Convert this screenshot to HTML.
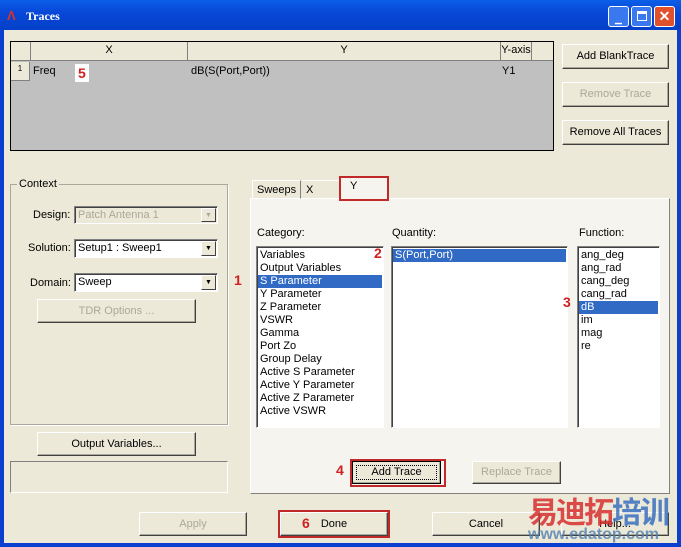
<!DOCTYPE html>
<html><head><meta charset="utf-8"><style>
*{box-sizing:border-box;margin:0;padding:0}
body{width:681px;height:547px;overflow:hidden;background:#0a3fd0;font-family:"Liberation Sans",sans-serif;font-size:11px;color:#000;position:relative}
.a{position:absolute}
.win{left:4px;top:30px;width:673px;height:513px;background:#ECE9D8}
.btn{position:absolute;background:#ECE9D8;border:1px solid;border-color:#fff #404040 #404040 #fff;box-shadow:inset -1px -1px 0 #aca899;text-align:center;font-size:11px}
.dis{color:#aca899}
.sunk{position:absolute;background:#fff;border:1px solid;border-color:#808080 #fff #fff #808080;box-shadow:inset 1px 1px 0 #404040}
.red{position:absolute;border:2px solid #c0282a}
.num{position:absolute;color:#d02020;font-weight:bold;font-size:14px}
.li{height:13px;line-height:13px;padding-left:2px;font-size:11px}
.sel{background:#316ac5;color:#fff}
.combo{position:absolute;background:#fff;border:1px solid;border-color:#808080 #fff #fff #808080;box-shadow:inset 1px 1px 0 #404040;padding:2px 3px;font-size:11px}
.dd{position:absolute;right:1px;top:1px;width:15px;bottom:1px;background:#ECE9D8;border:1px solid;border-color:#fff #404040 #404040 #fff;font-size:7px;text-align:center;line-height:14px}
</style></head><body>
<div class="a" style="left:0;top:0;width:681px;height:30px;background:linear-gradient(#0a5fe8,#0848d8 40%,#0440c8)"></div>
<div class="a" style="left:7px;top:8px;color:#e03020;font-size:13px;font-weight:bold">&#923;</div>
<div class="a" style="left:26px;top:9px;color:#fff;font-weight:bold;font-size:12px;font-family:'Liberation Serif',serif">Traces</div>
<div class="a" style="left:608px;top:6px;width:21px;height:21px;background:#3a78f0;border:1px solid #fff;border-radius:3px;color:#fff;font-size:9px;text-align:center;line-height:24px">▁</div>
<div class="a" style="left:631px;top:6px;width:21px;height:21px;background:#3a78f0;border:1px solid #fff;border-radius:3px"><div class="a" style="left:5px;top:4px;width:10px;height:10px;border:1px solid #fff;border-top-width:3px"></div></div>
<div class="a" style="left:654px;top:6px;width:21px;height:21px;background:#e0502a;border:1px solid #fff;border-radius:3px;color:#fff;font-weight:bold;font-size:14px;text-align:center;line-height:19px">✕</div>
<div class="a win"></div>

<!-- table -->
<div class="a" style="left:10px;top:41px;width:544px;height:110px;background:#c0c0c0;border:1px solid #000"></div>
<div class="a" style="left:11px;top:42px;width:542px;height:19px;background:#ECE9D8;border-bottom:1px solid #808080"></div>
<div class="a" style="left:30px;top:42px;width:158px;height:19px;border-left:1px solid #808080;border-right:1px solid #808080;text-align:center;line-height:17px">X</div>
<div class="a" style="left:188px;top:42px;width:312px;height:19px;text-align:center;line-height:17px">Y</div>
<div class="a" style="left:500px;top:42px;width:32px;height:19px;border-left:1px solid #808080;border-right:1px solid #808080;text-align:center;line-height:17px">Y-axis</div>
<div class="a" style="left:11px;top:62px;width:19px;height:19px;background:#ECE9D8;border-right:1px solid #808080;border-bottom:1px solid #808080;font-size:8px;text-align:center;line-height:14px">1</div>
<div class="a" style="left:33px;top:65px">Freq</div>
<div class="a" style="left:191px;top:65px">dB(S(Port,Port))</div>
<div class="a" style="left:502px;top:65px">Y1</div>
<div class="a" style="left:75px;top:64px;width:14px;height:18px;background:#fff"></div>
<div class="num" style="left:78px;top:65px">5</div>

<div class="btn" style="left:562px;top:44px;width:107px;height:25px;line-height:23px">Add BlankTrace</div>
<div class="btn dis" style="left:562px;top:82px;width:107px;height:25px;line-height:23px">Remove Trace</div>
<div class="btn" style="left:562px;top:120px;width:107px;height:25px;line-height:23px">Remove All Traces</div>

<!-- context -->
<div class="a" style="left:10px;top:184px;width:218px;height:241px;border:1px solid #aca899;box-shadow:1px 1px 0 #fff"></div>
<div class="a" style="left:17px;top:178px;background:#ECE9D8;padding:0 2px">Context</div>
<div class="a" style="left:33px;top:209px;color:#000">Design:</div>
<div class="combo dis" style="left:74px;top:206px;width:144px;height:18px;background:#ECE9D8">Patch Antenna 1<div class="dd">▼</div></div>
<div class="a" style="left:28px;top:242px">Solution:</div>
<div class="combo" style="left:74px;top:239px;width:144px;height:19px">Setup1 : Sweep1<div class="dd">▼</div></div>
<div class="a" style="left:30px;top:277px">Domain:</div>
<div class="combo" style="left:74px;top:273px;width:144px;height:19px">Sweep<div class="dd">▼</div></div>
<div class="btn dis" style="left:37px;top:299px;width:159px;height:24px;line-height:22px">TDR Options ...</div>
<div class="btn" style="left:37px;top:432px;width:159px;height:24px;line-height:22px">Output Variables...</div>
<div class="a" style="left:10px;top:461px;width:218px;height:32px;border:1px solid;border-color:#808080 #fff #fff #808080"></div>
<div class="num" style="left:234px;top:272px">1</div>

<!-- tabs -->
<div class="a" style="left:250px;top:198px;width:420px;height:296px;border:1px solid;border-color:#fff #808080 #808080 #fff;background:#f5f4ee"></div>
<div class="a" style="left:252px;top:180px;width:49px;height:19px;border:1px solid;border-color:#fff #808080 transparent #fff;padding:3px 0 0 4px">Sweeps</div>
<div class="a" style="left:302px;top:180px;width:38px;height:19px;border-top:1px solid #fff;padding:3px 0 0 4px">X</div>
<div class="a" style="left:341px;top:178px;width:46px;height:21px;background:#f5f4ee;padding:2px 0 0 9px">Y</div>
<div class="red" style="left:339px;top:176px;width:50px;height:25px"></div>

<div class="a" style="left:257px;top:227px">Category:</div>
<div class="a" style="left:392px;top:227px">Quantity:</div>
<div class="a" style="left:579px;top:227px">Function:</div>
<div class="sunk" style="left:256px;top:246px;width:128px;height:182px;padding:2px 1px">
<div class="li">Variables</div><div class="li">Output Variables</div><div class="li sel">S Parameter</div><div class="li">Y Parameter</div><div class="li">Z Parameter</div><div class="li">VSWR</div><div class="li">Gamma</div><div class="li">Port Zo</div><div class="li">Group Delay</div><div class="li">Active S Parameter</div><div class="li">Active Y Parameter</div><div class="li">Active Z Parameter</div><div class="li">Active VSWR</div></div>
<div class="sunk" style="left:391px;top:246px;width:177px;height:182px;padding:2px 1px"><div class="li sel">S(Port,Port)</div></div>
<div class="sunk" style="left:577px;top:246px;width:83px;height:182px;padding:2px 1px">
<div class="li">ang_deg</div><div class="li">ang_rad</div><div class="li">cang_deg</div><div class="li">cang_rad</div><div class="li sel">dB</div><div class="li">im</div><div class="li">mag</div><div class="li">re</div></div>
<div class="num" style="left:374px;top:245px">2</div>
<div class="num" style="left:563px;top:294px">3</div>

<div class="btn" style="left:352px;top:461px;width:89px;height:23px;line-height:21px;border-color:#000;"><div style="position:absolute;left:3px;top:3px;right:3px;bottom:3px;border:1px dotted #000"></div>Add Trace</div>
<div class="red" style="left:350px;top:459px;width:96px;height:28px"></div>
<div class="num" style="left:336px;top:462px">4</div>
<div class="btn dis" style="left:472px;top:461px;width:89px;height:23px;line-height:21px">Replace Trace</div>

<div class="btn dis" style="left:139px;top:512px;width:108px;height:24px;line-height:22px">Apply</div>
<div class="btn" style="left:280px;top:512px;width:108px;height:24px;line-height:22px">Done</div>
<div class="red" style="left:278px;top:510px;width:112px;height:28px"></div>
<div class="num" style="left:302px;top:515px">6</div>
<div class="btn" style="left:432px;top:512px;width:108px;height:24px;line-height:22px">Cancel</div>
<div class="btn" style="left:561px;top:512px;width:108px;height:24px;line-height:22px">Help...</div>

<div class="a" style="left:528px;top:493px;color:#d83030;font-size:30px;font-weight:bold;font-family:'Noto Sans CJK SC',sans-serif;line-height:34px;letter-spacing:-2px;opacity:.85">易迪拓<span style="color:#3a70c0">培训</span></div>
<div class="a" style="left:528px;top:526px;color:#5080b0;font-size:16px;font-weight:bold;opacity:.8">www.edatop.com</div>
</body></html>
